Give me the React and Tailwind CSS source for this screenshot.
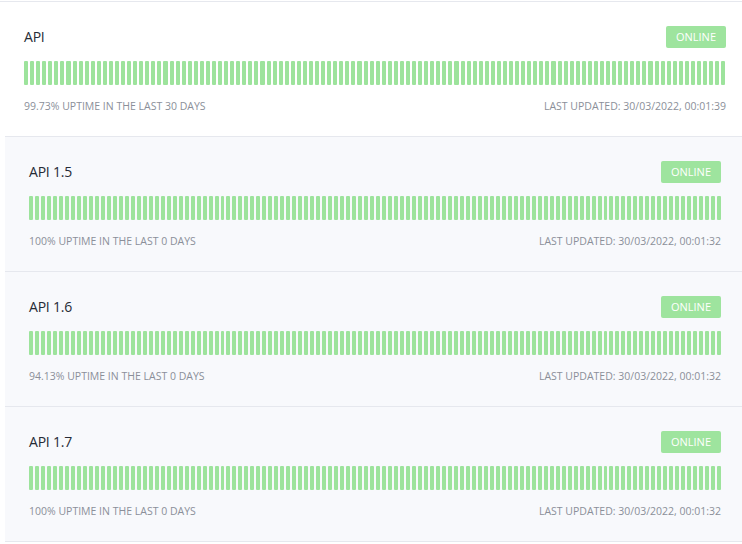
import React from "react";

const cards = [
  { name: "API", uptime: "99.73% UPTIME IN THE LAST 30 DAYS", updated: "LAST UPDATED: 30/03/2022, 00:01:39", first: true },
  { name: "API 1.5", uptime: "100% UPTIME IN THE LAST 0 DAYS", updated: "LAST UPDATED: 30/03/2022, 00:01:32" },
  { name: "API 1.6", uptime: "94.13% UPTIME IN THE LAST 0 DAYS", updated: "LAST UPDATED: 30/03/2022, 00:01:32" },
  { name: "API 1.7", uptime: "100% UPTIME IN THE LAST 0 DAYS", updated: "LAST UPDATED: 30/03/2022, 00:01:32" },
];

const bars = Array.from({ length: 116 });

function Card({ c }) {
  return (
    <div
      className={
        "border-t border-[#e6e8ee] px-6 pt-6 pb-[23px] " +
        (c.first ? "bg-white" : "bg-[#f8f9fc] ml-[5px] mr-[5px]")
      }
    >
      <div className="flex items-center justify-between h-[22px]">
        <div className="text-[14px] text-[#262b36] leading-none tracking-[-0.2px]">{c.name}</div>
        <div className="h-[22px] px-[10px] rounded-[2px] bg-[#9ee49e] text-white text-[11px] flex items-center">
          ONLINE
        </div>
      </div>
      <div className="mt-[13px] flex gap-[2px] h-6">
        {bars.map((_, i) => (
          <div key={i} className="flex-1 rounded-[1px] bg-[#9de39c]" />
        ))}
      </div>
      <div className="mt-[14px] flex justify-between text-[10.5px] leading-[14px] text-[#8b8f99]">
        <span>{c.uptime}</span>
        <span>{c.updated}</span>
      </div>
    </div>
  );
}

export default function App() {
  return (
    <div className="w-[742px] h-[544px] overflow-hidden bg-white" style={{ fontFamily: '"Open Sans", sans-serif' }}>
      <div className="w-[750px] pt-px">
        {cards.map((c) => (
          <Card key={c.name} c={c} />
        ))}
        <div className="border-t border-[#e6e8ee] ml-[5px] mr-[5px]" />
      </div>
    </div>
  );
}
